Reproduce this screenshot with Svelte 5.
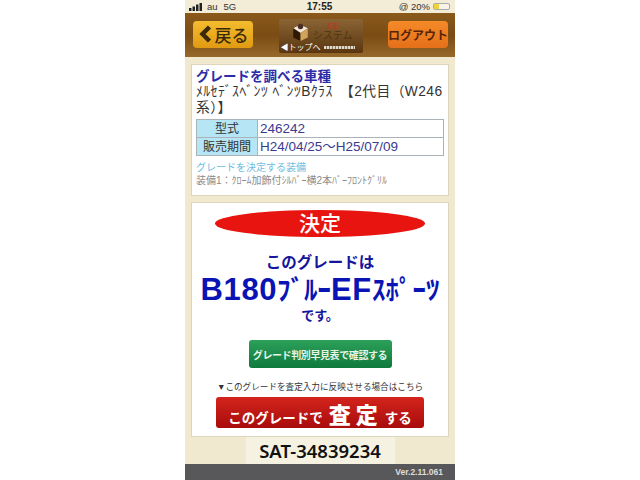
<script lang="ts">
    const specs = [
        { label: '型式', value: '246242' },
        { label: '販売期間', value: 'H24/04/25～H25/07/09' }
    ];
</script>

<div class="phone">
    <div class="status">
        <div class="status-left">
            <svg width="14" height="8" viewBox="0 0 14 8"><rect x="0" y="5" width="2.5" height="3" fill="#222"/><rect x="3.5" y="3.5" width="2.5" height="4.5" fill="#222"/><rect x="7" y="1.5" width="2.5" height="6.5" fill="#222"/><rect x="10.5" y="0" width="2.5" height="8" fill="#222"/></svg>
            <span>au</span><span class="net">5G</span>
        </div>
        <div class="clock">17:55</div>
        <div class="status-right">
            <span>@ 20%</span>
            <span class="battery"><span class="level"></span></span>
        </div>
    </div>

    <header class="top">
        <button class="back">
            <svg width="15" height="18" viewBox="0 0 15 18"><path d="M11.5 2 4.5 9l7 7" fill="none" stroke="#3a2a08" stroke-width="4.5"/></svg>
            <span>戻る</span>
        </button>
        <div class="logo">
            <div class="logo-main">
                <svg width="19" height="20" viewBox="0 0 20 22">
                    <path d="M10 3 18 7 10 12 2 7Z" fill="#efe8da"/>
                    <path d="M2 7 10 12V21L2 17Z" fill="#2e1a06"/>
                    <path d="M18 7 10 12V21L18 17Z" fill="#d0a45c"/>
                    <circle cx="10" cy="5" r="3" fill="#4a3024"/>
                </svg>
                <div class="logo-name">
                    <span class="logo-red">査定</span>
                    <span class="logo-text">システム</span>
                </div>
            </div>
            <div class="logo-foot">
                <span>◀トップへ</span>
                <span class="logo-bar"></span>
            </div>
        </div>
        <button class="logout">ログアウト</button>
    </header>

    <main class="content">
        <section class="card info">
            <h2>グレードを調べる車種</h2>
            <p class="car">ﾒﾙｾﾃﾞｽﾍﾞﾝﾂ ﾍﾞﾝﾂBｸﾗｽ　【2代目（W246系）】</p>
            <table>
                <tbody>
                    {#each specs as row}
                        <tr>
                            <th>{row.label}</th>
                            <td>{row.value}</td>
                        </tr>
                    {/each}
                </tbody>
            </table>
            <p class="equip-title">グレードを決定する装備</p>
            <p class="equip">装備1：ｸﾛｰﾑ加飾付ｼﾙﾊﾞｰ横2本ﾊﾞｰﾌﾛﾝﾄｸﾞﾘﾙ</p>
        </section>

        <section class="card result">
            <div class="oval">決定</div>
            <p class="lead">このグレードは</p>
            <p class="grade">B180<span class="grade-kana">ﾌﾞﾙｰ</span>EF<span class="grade-kana">ｽﾎﾟｰﾂ</span></p>
            <p class="desu">です。</p>
            <button class="green">グレード判別早見表で確認する</button>
            <p class="note">▼このグレードを査定入力に反映させる場合はこちら</p>
            <button class="red">このグレードで<b>査定</b>する</button>
        </section>

        <div class="sat">SAT-34839234</div>
    </main>

    <footer class="foot">Ver.2.11.061</footer>
</div>

<style>
    :global(body) {
        background: #fff;
    }
    .phone {
        width: 270px;
        height: 480px;
        margin: 0 auto;
        display: flex;
        flex-direction: column;
        background: #f0e9cf;
        font-family: "Liberation Sans", "Noto Sans CJK JP", sans-serif;
        overflow: hidden;
    }
    p, h2 {
        margin: 0;
    }
    button {
        border: none;
        padding: 0;
        font-family: inherit;
    }
    .status {
        height: 13px;
        flex: none;
        display: grid;
        grid-template-columns: 1fr auto 1fr;
        align-items: center;
        padding: 0 5px 0 4px;
        background: #f3ecd6;
        color: #333;
        font-size: 9.5px;
    }
    .status-left {
        display: flex;
        align-items: center;
        gap: 4px;
    }
    .net {
        margin-left: 2px;
    }
    .clock {
        font-weight: bold;
        font-size: 10px;
        color: #222;
    }
    .status-right {
        display: flex;
        justify-content: flex-end;
        align-items: center;
        gap: 3px;
    }
    .battery {
        width: 15px;
        height: 5px;
        border: 1px solid #aaa;
        border-radius: 2px;
        background: #f8f4e8;
    }
    .level {
        display: block;
        width: 5px;
        height: 100%;
        background: #f2d23c;
    }
    .top {
        height: 44px;
        flex: none;
        display: flex;
        align-items: center;
        justify-content: space-between;
        padding: 0 7px 0 8px;
        background: linear-gradient(#8a5a1c, #7a4c14 50%, #96682a);
    }
    .back {
        width: 60px;
        height: 27px;
        display: flex;
        align-items: center;
        justify-content: center;
        gap: 2px;
        border-radius: 4px;
        background: linear-gradient(#f4bc2e, #e09a12);
        color: #3a2a08;
        font-size: 17px;
        font-weight: 500;
        margin-top: -2px;
    }
    .logo {
        width: 84px;
        height: 34px;
        margin-top: 1px;
        padding: 3px 2px 0;
        box-sizing: border-box;
        background: linear-gradient(#8a6434, #5a3610);
        border-radius: 2px;
    }
    .logo-main {
        display: flex;
        justify-content: flex-end;
        gap: 3px;
        height: 20px;
        padding-right: 8px;
    }
    .logo-name {
        display: flex;
        flex-direction: column;
        align-items: center;
        line-height: 1;
    }
    .logo-red {
        color: #c03420;
        font-size: 6px;
        line-height: 8px;
    }
    .logo-text {
        color: #4a3414;
        font-size: 10px;
        line-height: 11px;
    }
    .logo-foot {
        display: flex;
        align-items: center;
        gap: 3px;
        margin-top: 1px;
        color: #fff;
        font-size: 8px;
        line-height: 9px;
        white-space: nowrap;
    }
    .logo-bar {
        width: 31px;
        height: 3px;
        background: repeating-linear-gradient(90deg, #e0d8c8 0 2px, #8a7a60 2px 3px);
    }
    .logout {
        width: 60px;
        height: 27px;
        border-radius: 4px;
        background: linear-gradient(#f58a28, #e4701a);
        color: #5a2408;
        font-size: 12px;
        font-weight: bold;
        margin-top: -2px;
    }
    .content {
        flex: 1;
        display: flex;
        flex-direction: column;
        align-items: center;
        padding-top: 7px;
    }
    .card {
        width: 258px;
        box-sizing: border-box;
        background: #fff;
        border: 1px solid #ddd6bc;
    }
    .info {
        height: 132px;
        padding: 4px 4px;
    }
    h2 {
        font-size: 13.5px;
        line-height: 15px;
        font-weight: bold;
        color: #2c2ca8;
    }
    .car {
        font-size: 13.8px;
        line-height: 16px;
        letter-spacing: 0.4px;
        color: #333;
        margin-bottom: 3px;
    }
    table {
        width: 248px;
        border-collapse: collapse;
        table-layout: fixed;
    }
    th, td {
        height: 18px;
        padding: 0 2px;
        box-sizing: border-box;
        border: 1px solid #a9b3b8;
        font-size: 13.5px;
        line-height: 16px;
        font-weight: normal;
    }
    th {
        width: 61px;
        background: #b6e6f6;
        color: #333;
        font-size: 12px;
        text-align: center;
    }
    td {
        color: #3a3a90;
    }
    .equip-title {
        margin-top: 5px;
        font-size: 10px;
        line-height: 13px;
        color: #6cbce0;
    }
    .equip {
        font-size: 10px;
        line-height: 13px;
        color: #8a8a8a;
        white-space: nowrap;
    }
    .result {
        height: 235px;
        margin-top: 6px;
        display: flex;
        flex-direction: column;
        align-items: center;
    }
    .oval {
        width: 210px;
        height: 27px;
        margin-top: 7px;
        border-radius: 50%;
        background: #e81410;
        color: #fff;
        text-align: center;
        font-size: 21px;
        line-height: 27px;
        font-weight: 500;
    }
    .lead {
        margin-top: 16px;
        font-size: 15.5px;
        line-height: 20px;
        font-weight: bold;
        color: #14149c;
    }
    .grade {
        font-size: 31px;
        line-height: 33px;
        font-weight: bold;
        color: #0a14b4;
        white-space: nowrap;
        letter-spacing: 0.6px;
    }
    .grade-kana {
        font-size: 27px;
        line-height: 1;
        letter-spacing: 0;
    }
    .desu {
        font-size: 13px;
        line-height: 20px;
        font-weight: bold;
        color: #14149c;
    }
    .green {
        width: 143px;
        height: 28px;
        margin-top: 14px;
        border-radius: 3px;
        background: linear-gradient(#2ca05a, #0e7a3c);
        color: #e8f4e8;
        font-size: 10px;
        font-weight: bold;
        letter-spacing: -0.4px;
        white-space: nowrap;
    }
    .note {
        margin-top: 13px;
        font-size: 8.6px;
        line-height: 13px;
        color: #333;
    }
    .red {
        width: 208px;
        height: 31px;
        margin-top: 3px;
        border-radius: 3px;
        background: linear-gradient(#d4241c, #a80c0c);
        color: #fff;
        font-size: 13.5px;
        font-weight: bold;
        white-space: nowrap;
    }
    .red b {
        font-size: 22px;
        margin: 0 2px 0 6px;
        letter-spacing: 5px;
    }
    .sat {
        width: 149px;
        height: 27px;
        background: #f6f2e2;
        color: #111;
        text-align: center;
        font-size: 18.5px;
        line-height: 27px;
        font-family: "Noto Sans", "Open Sans", sans-serif;
        font-weight: 600;
    }
    .foot {
        height: 17px;
        flex: none;
        padding-right: 12px;
        background: #58585a;
        color: #ddd;
        text-align: right;
        font-size: 8.5px;
        line-height: 17px;
        font-weight: bold;
    }
</style>
